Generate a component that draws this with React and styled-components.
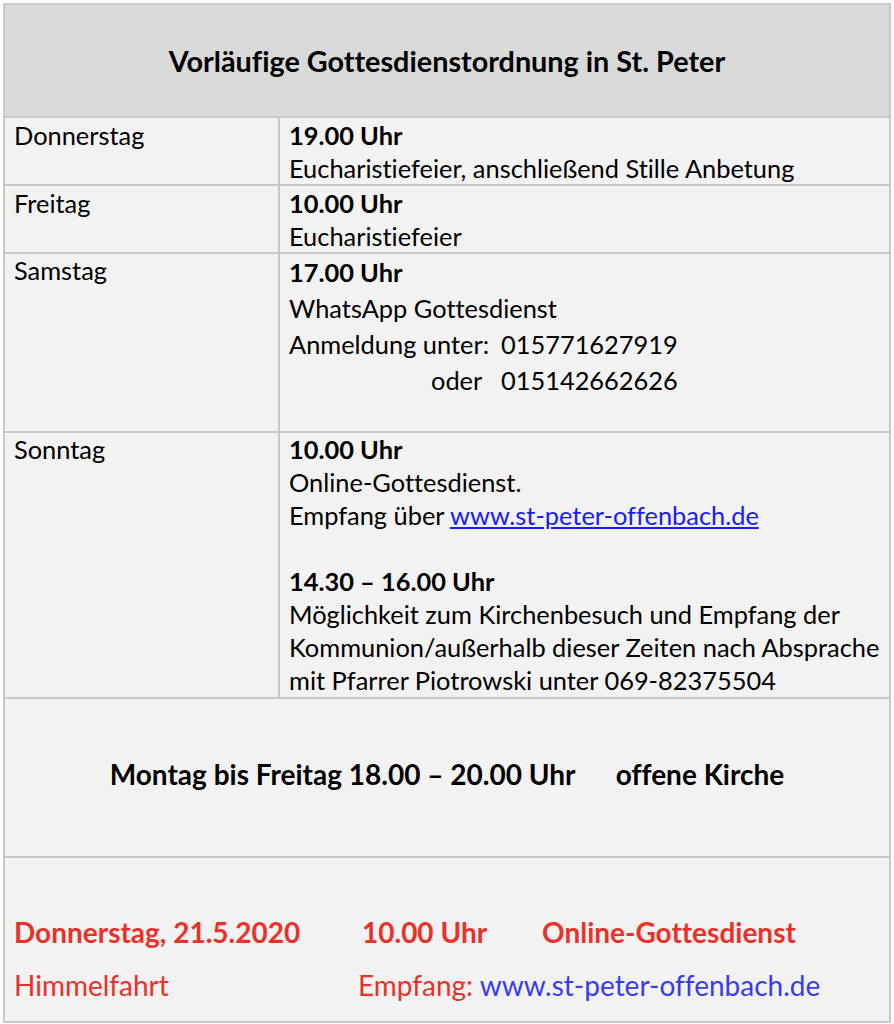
import React from "react";
import styled, { createGlobalStyle } from "styled-components";

const GlobalStyle = createGlobalStyle`
  body {
    margin: 0;
    background: #ffffff;
    font-family: Lato, "Liberation Sans", sans-serif;
    font-variant-ligatures: none;
    color: #000000;
  }
`;

//Outer table box
const Board = styled.div`
  margin: 3px 0 0 3px;
  width: 888px;
  border: 2px solid #c8c8c8;
  box-sizing: border-box;
  background-color: #f2f2f2;
`;

const Header = styled.div`
  height: 111px;
  background-color: #d9d9d9;
  display: flex;
  align-items: center;
  justify-content: center;
  font-size: 28.8px;
  font-weight: 700;
  border-bottom: 2px solid #c8c8c8;
`;

const Row = styled.div`
  display: grid;
  grid-template-columns: 275px 1fr;
  height: ${(p) => p.height}px;
  border-bottom: 2px solid #c8c8c8;
  box-sizing: border-box;
  font-size: 25.4px;
  line-height: 33px;
`;

const Day = styled.div`
  padding: ${(p) => p.top ?? 1}px 10px 0 9px;
  border-right: 2px solid #c8c8c8;
`;

const Details = styled.div`
  padding: ${(p) => p.top ?? 1}px 8px 0 9px;
  line-height: ${(p) => p.spacing || 33}px;
  white-space: nowrap;
`;

const Time = styled.div`
  font-weight: 700;
`;

const Link = styled.a`
  color: #1a1aff;
  text-decoration: underline;
`;

const Gap = styled.div`
  height: 33px;
`;

const PhoneGrid = styled.div`
  display: grid;
  grid-template-columns: 212px auto;
  justify-content: start;
`;

const PhoneLabel = styled.span`
  padding-left: ${(p) => p.indent || 0}px;
`;

const Banner = styled.div`
  height: 159px;
  display: flex;
  align-items: center;
  justify-content: center;
  padding-bottom: 8px;
  box-sizing: border-box;
  font-size: 28px;
  font-weight: 700;
  white-space: pre;
  border-bottom: 2px solid #c8c8c8;
`;

const Notice = styled.div`
  height: 163px;
  padding: 56px 0 0 9px;
  box-sizing: border-box;
  display: grid;
  grid-template-columns: 348px 180px auto;
  align-content: start;
  row-gap: 16px;
  font-size: 28px;
  line-height: 37px;
  color: #ea3129;
`;

const NoticeCell = styled.div`
  font-weight: ${(p) => (p.bold ? 700 : 400)};
  margin-left: ${(p) => p.shift || 0}px;
  grid-column: ${(p) => p.span || "auto"};
  white-space: nowrap;
`;

const Web = styled.span`
  color: #3a3aee;
`;

const App = () => {
  return (
    <>
      <GlobalStyle />
      <Board>
        <Header>Vorläufige Gottesdienstordnung in St. Peter</Header>

        <Row height={68}>
          <Day>Donnerstag</Day>
          <Details>
            <Time>19.00 Uhr</Time>
            <div>Eucharistiefeier, anschließend Stille Anbetung</div>
          </Details>
        </Row>

        <Row height={68}>
          <Day>Freitag</Day>
          <Details>
            <Time>10.00 Uhr</Time>
            <div>Eucharistiefeier</div>
          </Details>
        </Row>

        <Row height={179}>
          <Day top={0}>Samstag</Day>
          <Details top={0} spacing={36}>
            <Time>17.00 Uhr</Time>
            <div>WhatsApp Gottesdienst</div>
            <PhoneGrid>
              <PhoneLabel>Anmeldung unter:</PhoneLabel>
              <span>015771627919</span>
              <PhoneLabel indent={142}>oder</PhoneLabel>
              <span>015142662626</span>
            </PhoneGrid>
          </Details>
        </Row>

        <Row height={266}>
          <Day top={0}>Sonntag</Day>
          <Details top={0}>
            <Time>10.00 Uhr</Time>
            <div>Online-Gottesdienst.</div>
            <div>
              Empfang über <Link href="#">www.st-peter-offenbach.de</Link>
            </div>
            <Gap />
            <Time>14.30 – 16.00 Uhr</Time>
            <div>Möglichkeit zum Kirchenbesuch und Empfang der</div>
            <div>Kommunion/außerhalb dieser Zeiten nach Absprache</div>
            <div>mit Pfarrer Piotrowski unter 069-82375504</div>
          </Details>
        </Row>

        <Banner>{"Montag bis Freitag 18.00 – 20.00 Uhr      offene Kirche"}</Banner>

        <Notice>
          <NoticeCell bold>Donnerstag, 21.5.2020</NoticeCell>
          <NoticeCell bold>10.00 Uhr</NoticeCell>
          <NoticeCell bold>Online-Gottesdienst</NoticeCell>
          <NoticeCell>Himmelfahrt</NoticeCell>
          <NoticeCell shift={-4} span="2 / 4">
            Empfang: <Web>www.st-peter-offenbach.de</Web>
          </NoticeCell>
        </Notice>
      </Board>
    </>
  );
};

export default App;
